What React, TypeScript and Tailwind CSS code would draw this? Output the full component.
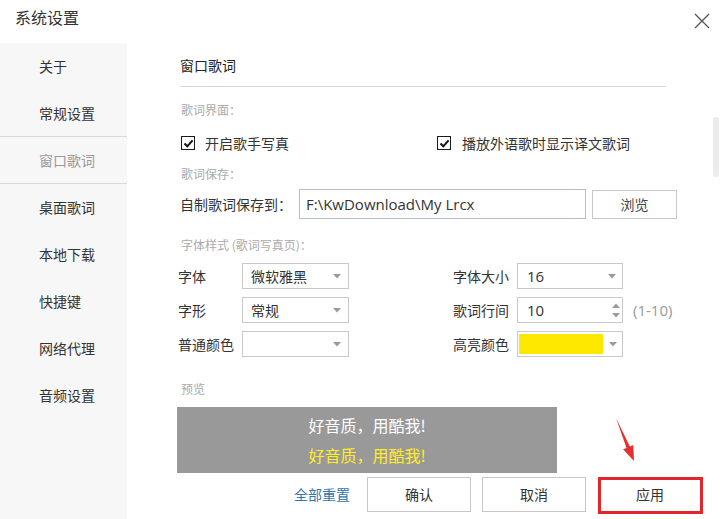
import React from "react";

const Arrow = () => (
  <svg width="8" height="5" viewBox="0 0 8 5" className="shrink-0">
    <path d="M0 0 L8 0 L4 4.5 Z" fill="#9a9a9a" />
  </svg>
);

const Check = () => (
  <span className="w-[14px] h-[14px] border-[1.5px] border-[#1a1a1a] bg-white flex items-center justify-center shrink-0">
    <svg width="11" height="11" viewBox="0 0 11 11">
      <path d="M1.5 5.5 L4.3 8.3 L9.6 2.4" fill="none" stroke="#111" strokeWidth="2" />
    </svg>
  </span>
);

const Select = ({ w, children, arrowPr = "pr-[7px]" }: { w: string; children?: React.ReactNode; arrowPr?: string }) => (
  <div className={`${w} h-[26px] border border-[#c9c9c9] bg-white flex items-center justify-between ${arrowPr}`}>
    <div className="flex-1 flex items-center h-full">{children}</div>
    <Arrow />
  </div>
);

export default function App() {
  const side = ["桌面歌词", "本地下载", "快捷键", "网络代理", "音频设置"];
  return (
    <div className="w-[720px] h-[519px] bg-white relative overflow-hidden text-[#333] font-['Microsoft_YaHei','Noto_Sans_CJK_SC',sans-serif]">
      {/* title bar */}
      <div className="h-[43px] flex items-start justify-between pl-[15px] pr-[10px]">
        <span className="mt-[8px] text-[16px] leading-[18px] text-[#333]">系统设置</span>
        <svg width="16" height="16" viewBox="0 0 16 16" className="mt-[13px]">
          <path d="M1 1 L15 15 M15 1 L1 15" stroke="#555" strokeWidth="1.3" />
        </svg>
      </div>

      <div className="flex h-[476px]">
        {/* sidebar */}
        <aside className="w-[127px] bg-[#f7f7f7] text-[14px]">
          <div className="h-[47px] flex items-center pl-[39px]">关于</div>
          <div className="h-[47px] flex items-center pl-[39px] border-b border-[#d9d9d9]">常规设置</div>
          <div className="h-[47px] flex items-center pl-[39px] border-b border-[#d9d9d9] text-[#999]">窗口歌词</div>
          {side.map((s) => (
            <div key={s} className="h-[47px] flex items-center pl-[39px]">
              {s}
            </div>
          ))}
        </aside>

        {/* main */}
        <main className="flex-1 pl-[50px] text-[14px]">
          <div className="ml-[3px] w-[486px] h-[44px] border-b border-[#d5d5d5] flex items-center pt-[1px]">
            <span className="text-[14px] text-[#222]">窗口歌词</span>
          </div>

          <div className="mt-[13px] h-[20px] flex items-center pl-[4px] text-[12px] text-[#aaa]">歌词界面：</div>

          <div className="mt-[13px] h-[20px] flex items-center pl-[4px]">
            <div className="w-[256px] flex items-center gap-[10px]">
              <Check />
              <span>开启歌手写真</span>
            </div>
            <div className="flex items-center gap-[11px]">
              <Check />
              <span>播放外语歌时显示译文歌词</span>
            </div>
          </div>

          <div className="mt-[11px] h-[20px] flex items-center pl-[4px] text-[12px] text-[#aaa]">歌词保存：</div>

          <div className="mt-[5px] h-[30px] flex items-center">
            <div className="w-[122px] pl-[3px]">自制歌词保存到：</div>
            <div className="w-[287px] h-[30px] border border-[#b3c0c8] flex items-center pl-[6px] text-[15px] text-[#333] font-['Open_Sans','Noto_Sans',sans-serif]">
              F:\KwDownload\My Lrcx
            </div>
            <div className="ml-[6px] w-[85px] h-[29px] border border-[#c8c8c8] flex items-center justify-center text-[#444]">浏览</div>
          </div>

          <div className="mt-[16px] h-[20px] flex items-center pl-[4px] text-[12px] text-[#aaa]">字体样式 (歌词写真页)：</div>

          {/* row 1 */}
          <div className="mt-[8px] h-[26px] flex items-center">
            <div className="w-[65px] pl-[1px]">字体</div>
            <Select w="w-[107px]">
              <span className="pl-[8px]">微软雅黑</span>
            </Select>
            <div className="w-[104px]" />
            <div className="w-[64px]">字体大小</div>
            <Select w="w-[106px]" arrowPr="pr-[6px]">
              <span className="pl-[9px] text-[15px] font-['Open_Sans','Noto_Sans',sans-serif]">16</span>
            </Select>
          </div>

          {/* row 2 */}
          <div className="mt-[8px] h-[26px] flex items-center">
            <div className="w-[65px] pl-[1px]">字形</div>
            <Select w="w-[107px]">
              <span className="pl-[8px]">常规</span>
            </Select>
            <div className="w-[104px]" />
            <div className="w-[64px]">歌词行间</div>
            <div className="w-[106px] h-[26px] border border-[#c9c9c9] flex items-center justify-between pr-[1px]">
              <span className="pl-[9px] text-[15px] font-['Open_Sans','Noto_Sans',sans-serif]">10</span>
              <div className="flex flex-col items-center gap-[5px] w-[10px]">
                <svg width="8" height="5" viewBox="0 0 8 5">
                  <path d="M0 5 L8 5 L4 0.5 Z" fill="#9a9a9a" />
                </svg>
                <svg width="8" height="5" viewBox="0 0 8 5">
                  <path d="M0 0 L8 0 L4 4.5 Z" fill="#9a9a9a" />
                </svg>
              </div>
            </div>
            <span className="ml-[10px] text-[15px] text-[#9a9a9a] font-['Open_Sans','Noto_Sans',sans-serif]">(1-10)</span>
          </div>

          {/* row 3 */}
          <div className="mt-[8px] h-[26px] flex items-center">
            <div className="w-[65px] pl-[1px]">普通颜色</div>
            <Select w="w-[107px]" />
            <div className="w-[104px]" />
            <div className="w-[64px]">高亮颜色</div>
            <Select w="w-[106px]" arrowPr="pr-[5px]">
              <span className="ml-[1px] w-[84px] h-[20px] bg-[#ffe800]" />
            </Select>
          </div>

          <div className="mt-[22px] h-[20px] flex items-center pl-[4px] text-[12px] text-[#aaa]">预览</div>

          <div className="mt-[8px] w-[380px] h-[66px] bg-[#999999] flex flex-col items-center justify-center gap-[10px] text-[16px] leading-[20px]">
            <span className="text-white">好音质，用酷我!</span>
            <span className="text-[#ffee22]">好音质，用酷我!</span>
          </div>

          <div className="mt-[4px] h-[35px] flex items-center">
            <span className="ml-[117px] text-[#2f78ad]">全部重置</span>
            <div className="ml-[17px] w-[104px] h-[35px] border border-[#c8c8c8] flex items-center justify-center">确认</div>
            <div className="ml-[11px] w-[104px] h-[35px] border border-[#c8c8c8] flex items-center justify-center">取消</div>
            <div className="ml-[12px] w-[104px] h-[35px] border border-[#c8c8c8] flex items-center justify-center">应用</div>
          </div>
        </main>
      </div>

      {/* scrollbar */}
      <div className="absolute left-[713px] top-[117px] w-[6px] h-[60px] rounded-[3px] bg-[#ebebeb]" />

      {/* red annotation box */}
      <div className="absolute left-[598px] top-[477px] w-[105px] h-[37px] border-[3px] border-[#e3262b] pointer-events-none" />

      {/* red arrow */}
      <svg className="absolute left-[600px] top-[410px] pointer-events-none" width="50" height="60" viewBox="0 0 50 60">
        <polygon points="16,8 29.9,36.5 33.3,35.1 34,51 23.1,39.3 26.5,37.9" fill="#e53030" />
      </svg>
    </div>
  );
}
